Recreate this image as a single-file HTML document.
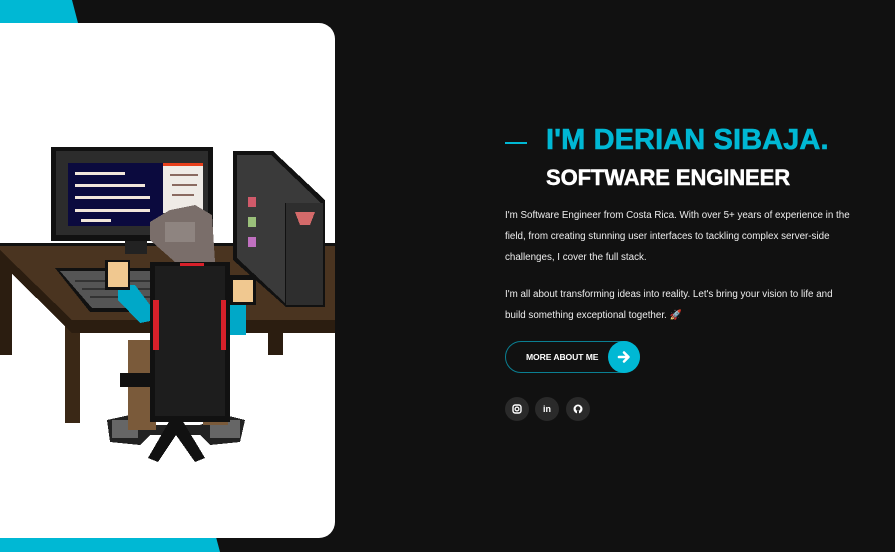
<!DOCTYPE html>
<html><head><meta charset="utf-8"><style>
*{margin:0;padding:0;box-sizing:border-box}
html,body{width:895px;height:552px;overflow:hidden;background:#111111;font-family:"Liberation Sans",sans-serif}
.cy1{position:absolute;left:0;top:0;width:80px;height:23px;background:#00b8d4;clip-path:polygon(0 0,72px 0,78px 23px,0 23px)}
.cy2{position:absolute;left:0;top:537px;width:220px;height:15px;background:#00b8d4;clip-path:polygon(0 0,216px 0,220px 15px,0 15px)}
.card{position:absolute;left:0;top:23px;width:335px;height:515px;background:#fff;border-radius:0 16px 16px 0}
.dash{position:absolute;left:505px;top:142px;width:22px;height:2px;background:#00b8d4}
h1{position:absolute;left:546px;top:124px;font-size:29px;font-weight:bold;color:#00b8d4;white-space:nowrap;letter-spacing:0.1px;-webkit-text-stroke:0.6px #00b8d4}
h2{position:absolute;left:546px;top:165px;font-size:22px;font-weight:bold;color:#fff;white-space:nowrap;letter-spacing:-0.1px;-webkit-text-stroke:0.5px #fff}
p{position:absolute;left:505px;width:350px;font-size:9.8px;line-height:21px;color:#eee}
.btn{position:absolute;left:505px;top:341px;width:135px;height:32px;border-radius:16px;border:1px solid #0a7f92;background:#111}
.btn span{position:absolute;left:20px;top:10px;font-size:8.6px;font-weight:bold;color:#fff;letter-spacing:-0.1px}
.btn .c{position:absolute;right:-1px;top:-1px;width:32px;height:32px;border-radius:50%;background:#00b8d4}
.s{position:absolute;top:397px;width:24px;height:24px;border-radius:50%;background:#2a2a2a;color:#fff;font-size:9px;font-weight:bold;text-align:center;line-height:24px}
</style></head><body>
<div class="cy1"></div><div class="cy2"></div>
<div class="card">
<svg width="335" height="515" viewBox="0 23 335 515" style="position:absolute;left:0;top:0" shape-rendering="crispEdges">
<rect x="0" y="255" width="12" height="100" fill="#2b1d10"/>
<rect x="65" y="320" width="15" height="103" fill="#3a2816"/>
<rect x="268" y="330" width="15" height="25" fill="#2b1d10"/>
<polygon points="0,243 335,243 335,320 72,320 0,250" fill="#4a3420"/>
<polygon points="0,250 72,320 72,333 0,262" fill="#2b1d10"/>
<rect x="72" y="320" width="263" height="13" fill="#2b1d10"/>
<rect x="0" y="243" width="335" height="3" fill="#111"/>
<polygon points="55,268 165,268 165,312 90,312" fill="#111"/>
<polygon points="60,271 162,271 162,308 92,308" fill="#555"/>
<g fill="#333"><rect x="75" y="280" width="80" height="2"/><rect x="82" y="288" width="75" height="2"/><rect x="90" y="296" width="68" height="2"/></g>
<rect x="125" y="238" width="22" height="16" fill="#222"/>
<rect x="51" y="147" width="162" height="94" fill="#111"/>
<rect x="56" y="151" width="152" height="84" fill="#2c2c2c"/>
<rect x="68" y="163" width="95" height="63" fill="#0b0a3e"/>
<rect x="163" y="163" width="40" height="50" fill="#efebe6"/>
<rect x="163" y="163" width="40" height="3" fill="#e8401c"/>
<g fill="#f2e6da"><rect x="75" y="172" width="50" height="3"/><rect x="75" y="184" width="70" height="3"/><rect x="75" y="196" width="75" height="3"/><rect x="75" y="209" width="75" height="3"/><rect x="81" y="219" width="30" height="3"/></g>
<g fill="#8a6a60"><rect x="170" y="174" width="28" height="2"/><rect x="172" y="184" width="25" height="2"/><rect x="172" y="194" width="22" height="2"/></g>
<polygon points="233,151 273,151 325,200 325,307 286,307 233,260" fill="#111"/>
<polygon points="237,155 271,155 321,203 285,203 285,303 237,258" fill="#3a3a3a"/>
<rect x="286" y="203" width="37" height="102" fill="#2e2e2e"/>
<polygon points="295,212 315,212 310,225 300,225" fill="#d46a6a"/>
<rect x="248" y="197" width="8" height="10" fill="#d05a6a"/>
<rect x="248" y="217" width="8" height="10" fill="#9ac07a"/>
<rect x="248" y="237" width="8" height="10" fill="#c070c0"/>
<!-- chair base -->
<polygon points="107,420 130,415 150,425 200,425 225,415 245,420 240,442 210,445 200,435 150,435 140,445 110,442" fill="#222"/>
<rect x="112" y="420" width="26" height="18" fill="#666"/>
<rect x="210" y="420" width="30" height="18" fill="#666"/>
<polygon points="170,420 182,420 205,458 195,462 176,435 158,462 148,458" fill="#111"/>
<rect x="128" y="340" width="28" height="90" fill="#7a5a3a"/>
<rect x="203" y="390" width="25" height="35" fill="#7a5a3a"/>
<polygon points="118,285 135,285 150,305 155,320 140,323 118,300" fill="#00a8c8"/>
<rect x="228" y="305" width="18" height="30" fill="#00a8c8"/>
<rect x="105" y="260" width="25" height="30" fill="#111"/>
<rect x="108" y="262" width="20" height="25" fill="#f0c890"/>
<rect x="230" y="275" width="26" height="30" fill="#111"/>
<rect x="233" y="280" width="20" height="22" fill="#f0c890"/>
<rect x="120" y="373" width="40" height="14" fill="#111"/>
<rect x="150" y="262" width="80" height="160" fill="#111"/>
<rect x="155" y="266" width="70" height="150" fill="#1d1d1d"/>
<rect x="153" y="300" width="6" height="50" fill="#d8202a"/>
<rect x="221" y="300" width="5" height="50" fill="#d8202a"/>
<rect x="180" y="263" width="24" height="3" fill="#d8202a"/>
<polygon points="150,222 170,210 195,205 212,215 215,262 175,262 150,240" fill="#7a6e6a"/>
<rect x="165" y="222" width="30" height="20" fill="#8e8480"/>
</svg>
</div>
<div class="dash"></div>
<h1>I'M DERIAN SIBAJA.</h1>
<h2>SOFTWARE ENGINEER</h2>
<p style="top:205px">I'm Software Engineer from Costa Rica. With over 5+ years of experience in the field, from creating stunning user interfaces to tackling complex server-side challenges, I cover the full stack.</p>
<p style="top:284px">I'm all about transforming ideas into reality. Let's bring your vision to life and build something exceptional together. <span style="color:#e05070">🚀</span></p>
<div class="btn"><span>MORE ABOUT ME</span><div class="c"><svg width="32" height="32" viewBox="0 0 32 32"><path d="M11 16h9M16 11.5l4.5 4.5-4.5 4.5" stroke="#fff" stroke-width="2.6" fill="none" stroke-linecap="round" stroke-linejoin="round"/></svg></div></div>
<div class="s" style="left:505px"><svg width="24" height="24" viewBox="0 0 24 24"><rect x="8" y="8" width="8" height="8" rx="2.2" stroke="#fff" stroke-width="1.4" fill="none"/><circle cx="12" cy="12" r="1.9" stroke="#fff" stroke-width="1.3" fill="none"/></svg></div>
<div class="s" style="left:535px">in</div>
<div class="s" style="left:566px"><svg width="24" height="24" viewBox="0 0 24 24"><circle cx="12" cy="12" r="4.5" fill="#fff"/><circle cx="12" cy="11.6" r="2.3" fill="#2a2a2a"/><rect x="11" y="14" width="2" height="3" fill="#2a2a2a"/></svg></div>
</body></html>
